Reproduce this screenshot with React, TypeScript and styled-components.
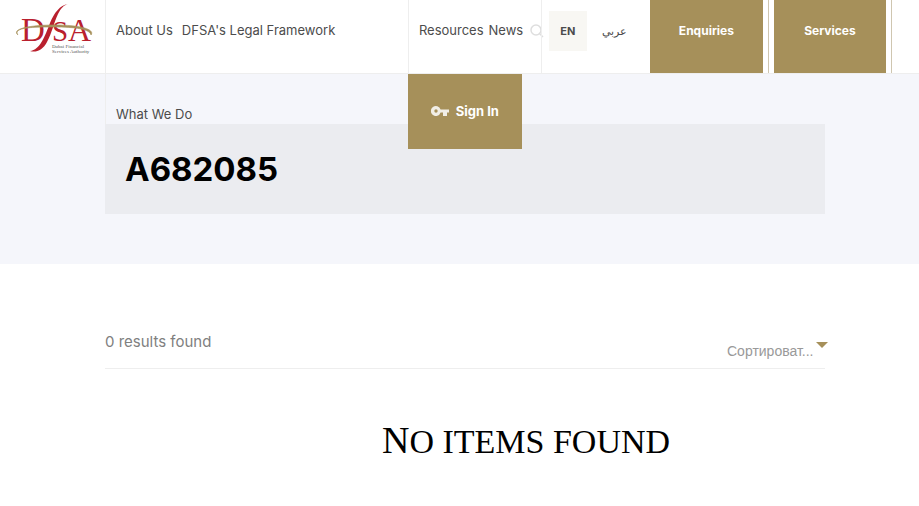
import React from "react";
import styled, { createGlobalStyle } from "styled-components";

const gold = "#a6905a";
const line = "#eeeeee";

const GlobalStyle = createGlobalStyle`
  *, *::before, *::after { box-sizing: border-box; }
  body {
    margin: 0;
    background: #fff;
    color: #4c4c4c;
    font-family: Inter, "Noto Sans", sans-serif;
    font-size: 13px;
  }
`;

const Header = styled.header`
  position: relative;
  z-index: 1;
  display: grid;
  grid-template-columns: 105px minmax(0, 303fr) minmax(0, 133fr) 109px auto;
  grid-template-rows: 73px;
  height: 74px;
  background: #fff;
  border-bottom: 1px solid ${line};
`;

const LogoLink = styled.a`
  display: block;
  padding: 4px 0 0 15px;
`;

const LogoArt = styled.svg`
  display: block;
  width: 79px;
  height: 52px;
`;

const MenuCell = styled.nav<{ $gap: number; $tall?: boolean }>`
  display: flex;
  flex-wrap: wrap;
  align-content: flex-start;
  column-gap: ${({ $gap }) => $gap}px;
  height: ${({ $tall }) => ($tall ? "124px" : "73px")};
  padding-left: 10px;
  border-left: 1px solid ${line};
`;

const MenuLink = styled.a`
  height: 84px;
  color: #4c4c4c;
  line-height: 61px;
  text-decoration: none;
  white-space: nowrap;
`;

const Tools = styled.div`
  min-width: 0;
`;

const ToolsNav = styled(MenuCell)`
  flex-wrap: nowrap;
`;

const SearchButton = styled.button`
  display: flex;
  flex: none;
  height: 61px;
  margin-left: 2px;
  padding: 0;
  align-items: center;
  border: 0;
  background: none;
  color: #dedede;
`;

const GoldButton = styled.button`
  padding: 0 22px;
  border: 0;
  background: ${gold};
  color: #fff;
  font: 700 12px Inter, sans-serif;
  white-space: nowrap;
`;

const SignIn = styled(GoldButton)`
  display: flex;
  width: 114px;
  height: 75px;
  margin-top: 1px;
  padding-bottom: 2px;
  align-items: center;
  justify-content: center;
  gap: 7px;
  font-size: 13px;
`;

const Languages = styled.div`
  display: flex;
  align-items: flex-start;
  gap: 15px;
  padding: 11px 0 0 7px;
  border-left: 1px solid ${line};
`;

const Language = styled.a<{ $active?: boolean }>`
  width: ${({ $active }) => ($active ? "38px" : "auto")};
  background: ${({ $active }) => ($active ? "#f8f7f3" : "none")};
  color: #4c4c4c;
  font-size: 11px;
  font-weight: ${({ $active }) => ($active ? 700 : 400)};
  line-height: 40px;
  text-align: center;
  text-decoration: none;
`;

const Actions = styled.div`
  display: flex;
  gap: 5px;
  padding-right: 27px;
`;

const ActionCell = styled.div`
  display: flex;
  padding-right: 5px;
  border-right: 1px solid #cfc6b0;
`;

const ActionButton = styled(GoldButton)`
  min-width: 112px;
  height: 73px;
  padding: 0 29px 12px;
`;

const Hero = styled.section`
  padding: 50px 94px 50px 105px;
  background: #f5f6fb;
`;

const TitlePanel = styled.div`
  padding: 20px;
  background: #ebecf0;
`;

const Title = styled.h1`
  margin: 0;
  color: #000;
  font-size: 33px;
  font-weight: 700;
  line-height: 50px;
`;

const Results = styled.main`
  padding: 64px 94px 40px 105px;
`;

const ResultsBar = styled.div`
  display: flex;
  justify-content: space-between;
  height: 41px;
  border-bottom: 1px solid ${line};
`;

const Count = styled.p`
  margin: 0;
  color: #808080;
  font-size: 15px;
  line-height: 28px;
`;

const Sort = styled.label`
  display: flex;
  margin-right: -3px;
  align-items: flex-start;
`;

const SortSelect = styled.select`
  width: 89px;
  height: 24px;
  margin-top: 11px;
  padding: 0;
  appearance: none;
  border: 0;
  background: none;
  color: #999;
  font: 14px "Liberation Sans", Arial, sans-serif;
`;

const Caret = styled.span`
  margin-top: 14px;
  border: 6px solid transparent;
  border-top-color: ${gold};
  border-bottom: 0;
`;

const Empty = styled.h2`
  margin: 47px 0 0;
  padding-left: 122px;
  color: #000;
  font-family: "Liberation Serif", serif;
  font-size: 34px;
  font-weight: 400;
  line-height: 48px;
  text-align: center;
  text-transform: uppercase;

  &::first-letter {
    font-size: 38px;
  }
`;

function Logo() {
  return (
    <LogoArt viewBox="0 0 79 52" role="img" aria-label="DFSA">
      <g fill="#b9202e" fontFamily="Liberation Serif, serif">
        <text x="6" y="37" fontSize="33">D</text>
        <text x="37" y="37" fontSize="29">S</text>
        <text x="53" y="37" fontSize="32">A</text>
      </g>
      <path
        d="M53 0C45 1 39 9 35 19C30 32 25 46 15 47C21 49 28 46 32 38C37 29 39 18 43 10C46 4 49 1 53 0Z"
        fill="#b9202e"
      />
      <path
        d="M3 31C-3 23 21 23 39 23C60 23 75 25 76 31C80 26 68 21 40 21C14 21-4 25 3 31Z"
        fill={gold}
        stroke={gold}
        strokeWidth="0.6"
      />
      <g fill="#555" fontFamily="Liberation Serif, serif" fontSize="5">
        <text x="37" y="44">Dubai Financial</text>
        <text x="37" y="49">Services Authority</text>
      </g>
    </LogoArt>
  );
}

function SearchIcon() {
  return (
    <svg width="14" height="14" viewBox="0 0 14 14" fill="none" stroke="currentColor" strokeWidth="1.5">
      <circle cx="6" cy="6" r="5" />
      <path d="M9.5 9.5L13 13" />
    </svg>
  );
}

function KeyIcon() {
  return (
    <svg width="18" height="10" viewBox="0 0 18 10" fill="#f1eee6">
      <path
        fillRule="evenodd"
        d="M9.6 3.5A5 5 0 1 0 9.6 6.6H12V10H16V6.6H18V3.5ZM5 3.3A1.7 1.7 0 1 1 5 6.7A1.7 1.7 0 0 1 5 3.3Z"
      />
    </svg>
  );
}

export default function App() {
  return (
    <>
      <GlobalStyle />
      <Header>
        <LogoLink href="#"><Logo /></LogoLink>
        <MenuCell $gap={9} $tall aria-label="Main">
          <MenuLink href="#">About Us</MenuLink>
          <MenuLink href="#">DFSA's Legal Framework</MenuLink>
          <MenuLink href="#">What We Do</MenuLink>
        </MenuCell>
        <Tools>
          <ToolsNav $gap={5} aria-label="Secondary">
            <MenuLink href="#">Resources</MenuLink>
            <MenuLink href="#">News</MenuLink>
            <SearchButton aria-label="Search"><SearchIcon /></SearchButton>
          </ToolsNav>
          <SignIn><KeyIcon />Sign In</SignIn>
        </Tools>
        <Languages>
          <Language href="#" $active>EN</Language>
          <Language href="#" lang="ar">عربي</Language>
        </Languages>
        <Actions>
          <ActionCell><ActionButton>Enquiries</ActionButton></ActionCell>
          <ActionCell><ActionButton>Services</ActionButton></ActionCell>
        </Actions>
      </Header>
      <Hero>
        <TitlePanel><Title>A682085</Title></TitlePanel>
      </Hero>
      <Results>
        <ResultsBar>
          <Count>0 results found</Count>
          <Sort>
            <SortSelect aria-label="Сортировать">
              <option>Сортироват...</option>
            </SortSelect>
            <Caret />
          </Sort>
        </ResultsBar>
        <Empty>No items found</Empty>
      </Results>
    </>
  );
}
